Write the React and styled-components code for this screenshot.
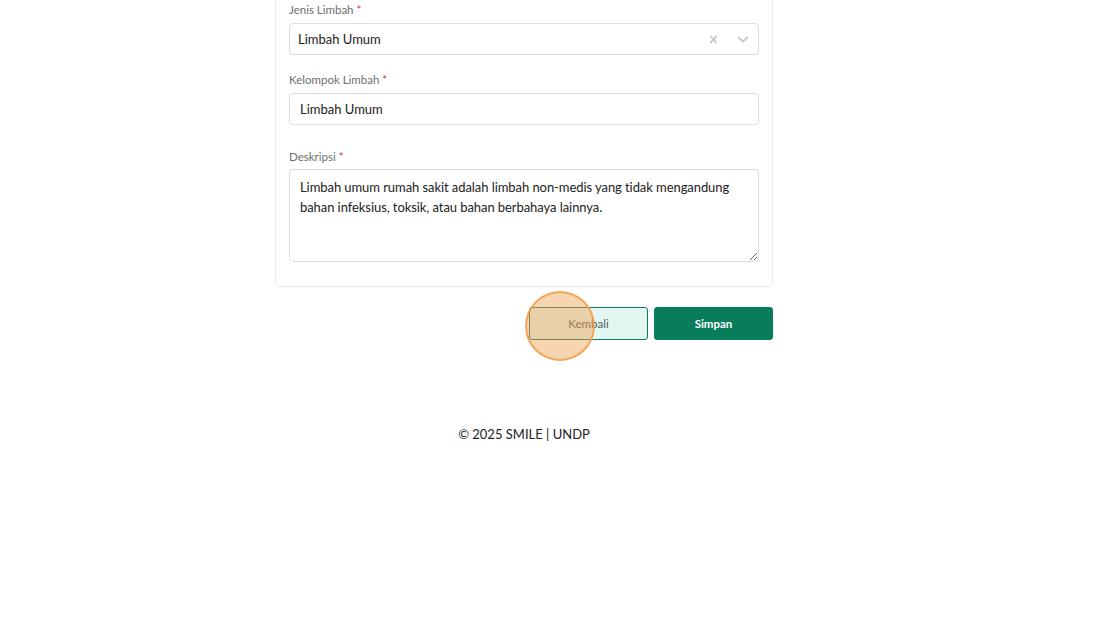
import React from 'react'
import styled, { createGlobalStyle } from 'styled-components';

const GlobalStyle = createGlobalStyle`
  html, body {
    margin: 0;
    padding: 0;
    background: #fff;
    font-family: Lato, "Open Sans", sans-serif;
    color: #212529;
    overflow: hidden;
  }
`;

export default function App() {
  return (
    <Page>
      <GlobalStyle />
      <Column>
        <Card>
          <Field>
            <Label>Jenis Limbah <Req>*</Req></Label>
            <Select>
              <SelectValue>Limbah Umum</SelectValue>
              <Indicator>
                <svg width="15" height="15" viewBox="0 0 20 20" fill="#c8c8c8">
                  <path d="M14.348 14.849c-.469.469-1.229.469-1.697 0L10 11.819l-2.651 3.029c-.469.469-1.229.469-1.697 0-.469-.469-.469-1.229 0-1.697l2.758-3.15-2.759-3.152c-.469-.469-.469-1.228 0-1.697.469-.469 1.228-.469 1.697 0L10 8.183l2.651-3.031c.469-.469 1.228-.469 1.697 0 .469.469.469 1.229 0 1.697l-2.758 3.152 2.758 3.15c.469.469.469 1.229 0 1.698z" />
                </svg>
              </Indicator>
              <Indicator>
                <svg width="18" height="18" viewBox="0 0 20 20" fill="#c8c8c8">
                  <path d="M4.516 7.548c.436-.446 1.043-.481 1.576 0L10 11.295l3.908-3.747c.533-.481 1.141-.446 1.574 0 .436.445.408 1.197 0 1.615-.406.418-4.695 4.502-4.695 4.502-.217.223-.502.335-.787.335s-.57-.112-.789-.335c0 0-4.287-4.084-4.695-4.502s-.436-1.17 0-1.615z" />
                </svg>
              </Indicator>
            </Select>
          </Field>
          <Field $top={16}>
            <Label>Kelompok Limbah <Req>*</Req></Label>
            <Input defaultValue="Limbah Umum" />
          </Field>
          <Field $top={23}>
            <Label $gap={3}>Deskripsi <Req>*</Req></Label>
            <TextArea defaultValue="Limbah umum rumah sakit adalah limbah non-medis yang tidak mengandung bahan infeksius, toksik, atau bahan berbahaya lainnya." />
          </Field>
        </Card>
        <Actions>
          <BackButton>
            Kembali
            <ClickMark />
          </BackButton>
          <SaveButton>Simpan</SaveButton>
        </Actions>
        <Footer>© 2025 SMILE | UNDP</Footer>
      </Column>
    </Page>
  )
}

const Page = styled.div`
  width: 1048px;
  height: 627px;
  display: flex;
  justify-content: center;
`;

const Column = styled.div`
  width: 498px;
  display: flex;
  flex-direction: column;
`;

const Card = styled.div`
  margin-top: -14px;
  border: 1px solid #e6e8ea;
  border-radius: 4px;
  padding: 14px 13px 24px;
  display: flex;
  flex-direction: column;
`;

const Field = styled.div`
  display: flex;
  flex-direction: column;
  margin-top: ${props => props.$top ?? 0}px;
`;

const Label = styled.label`
  font-size: 11.5px;
  line-height: 18px;
  color: #6e6e6e;
  margin-bottom: ${props => props.$gap ?? 4}px;
`;

const Req = styled.span`
  color: #dc3545;
`;

const Select = styled.div`
  height: 32px;
  box-sizing: border-box;
  border: 1px solid #dcdfe2;
  border-radius: 4px;
  display: flex;
  align-items: center;
  padding-left: 8px;
  padding-right: 1px;
`;

const SelectValue = styled.div`
  flex: 1;
  font-size: 13px;
  color: #222;
`;

const Indicator = styled.div`
  width: 29px;
  display: flex;
  justify-content: center;
  align-items: center;
`;

const Input = styled.input`
  height: 32px;
  box-sizing: border-box;
  border: 1px solid #dcdfe2;
  border-radius: 4px;
  padding: 0 10px;
  font-family: Lato, sans-serif;
  font-size: 13px;
  color: #222;
  outline: none;
`;

const TextArea = styled.textarea`
  height: 93px;
  box-sizing: border-box;
  border: 1px solid #dcdfe2;
  border-radius: 4px;
  padding: 7px 10px;
  font-family: Lato, sans-serif;
  font-size: 13px;
  letter-spacing: -0.07px;
  line-height: 20px;
  color: #222;
  outline: none;
  resize: vertical;
`;

const Actions = styled.div`
  margin-top: 20px;
  display: flex;
  justify-content: flex-end;
  gap: 6px;
`;

const BaseButton = styled.button`
  width: 119px;
  height: 33px;
  border-radius: 3px;
  font-family: Lato, sans-serif;
  font-size: 11.5px;
  cursor: pointer;
`;

const BackButton = styled(BaseButton)`
  position: relative;
  background: #e2f7f1;
  border: 1px solid #0b7a5c;
  color: #4f5d66;
`;

const SaveButton = styled(BaseButton)`
  background: #077d5b;
  border: 1px solid #077d5b;
  color: #fff;
  font-weight: 700;
`;

const ClickMark = styled.span`
  position: absolute;
  left: -5px;
  top: -17px;
  width: 66px;
  height: 66px;
  border-radius: 50%;
  background: rgba(242, 160, 80, 0.45);
  border: 2px solid rgba(242, 160, 80, 0.9);
  pointer-events: none;
`;

const Footer = styled.div`
  margin-top: 85px;
  text-align: center;
  font-size: 13px;
  line-height: 18px;
  color: #222;
`;
